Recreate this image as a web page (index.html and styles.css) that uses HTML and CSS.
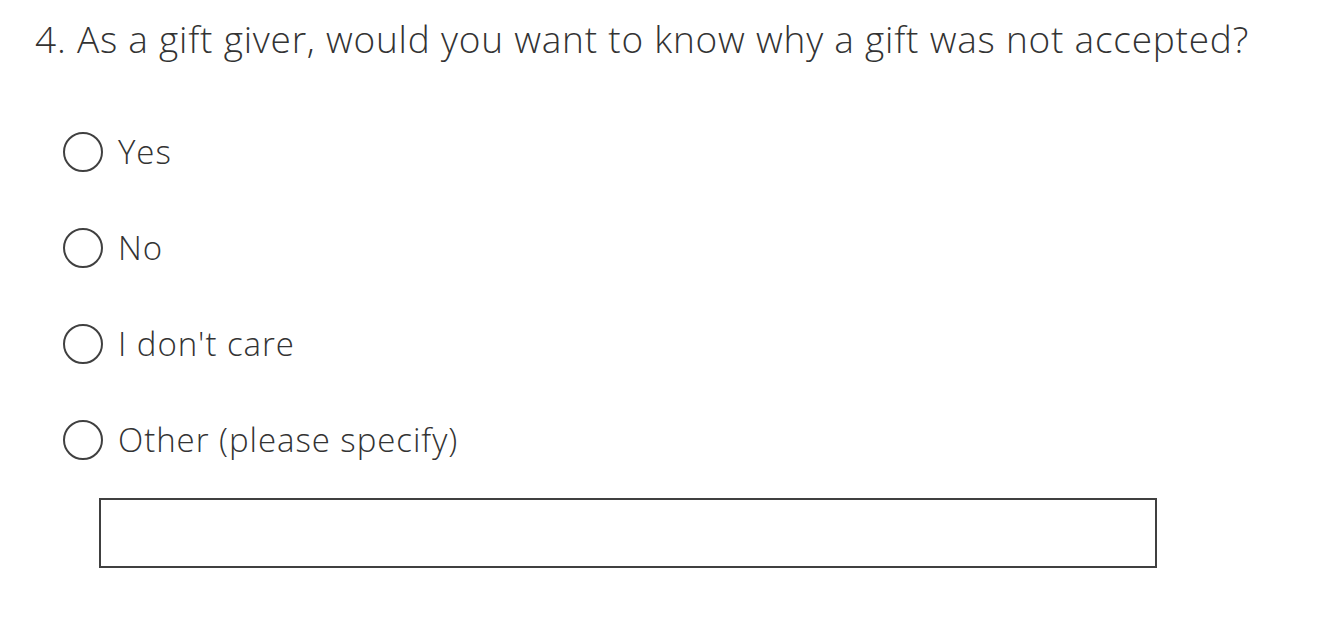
FILE: index.html
```html
<!DOCTYPE html>
<html lang="en">
<head>
<meta charset="utf-8">
<title>Survey question</title>
<link rel="stylesheet" href="styles.css">
</head>
<body>
<div class="question">
  <h2 class="q-title">4. As a gift giver, would you want to know why a gift was not accepted?</h2>
  <div class="options">
    <label class="option"><span class="radio"></span><span class="opt-text">Yes</span></label>
    <label class="option"><span class="radio"></span><span class="opt-text">No</span></label>
    <label class="option"><span class="radio"></span><span class="opt-text">I don't care</span></label>
    <label class="option"><span class="radio"></span><span class="opt-text">Other (please specify)</span></label>
  </div>
  <div class="other-box"></div>
</div>
</body>
</html>
```
FILE: styles.css
```css
html, body {
  margin: 0;
  padding: 0;
  background: #ffffff;
}
body {
  font-family: "Open Sans", "Liberation Sans", sans-serif;
  font-weight: 300;
  color: #333333;
}
.question {
  padding: 16px 0 0 35px;
}
.q-title {
  margin: 0;
  font-size: 37px;
  font-weight: 300;
  line-height: 46px;
  letter-spacing: 0.78px;
  color: #333333;
}
.options {
  display: flex;
  flex-direction: column;
  margin-top: 42px;
  padding-left: 28px;
}
.option {
  display: flex;
  align-items: center;
  height: 96px;
  gap: 15px;
}
.radio {
  width: 36px;
  height: 36px;
  border: 2px solid #404040;
  border-radius: 50%;
  flex: none;
}
.opt-text {
  font-size: 33px;
  letter-spacing: 0.95px;
  line-height: 40px;
  padding-bottom: 1px;
  color: #333333;
}
.other-box {
  margin-left: 64px;
  margin-top: 10px;
  width: 1054px;
  height: 66px;
  border: 2px solid #404040;
}
```
